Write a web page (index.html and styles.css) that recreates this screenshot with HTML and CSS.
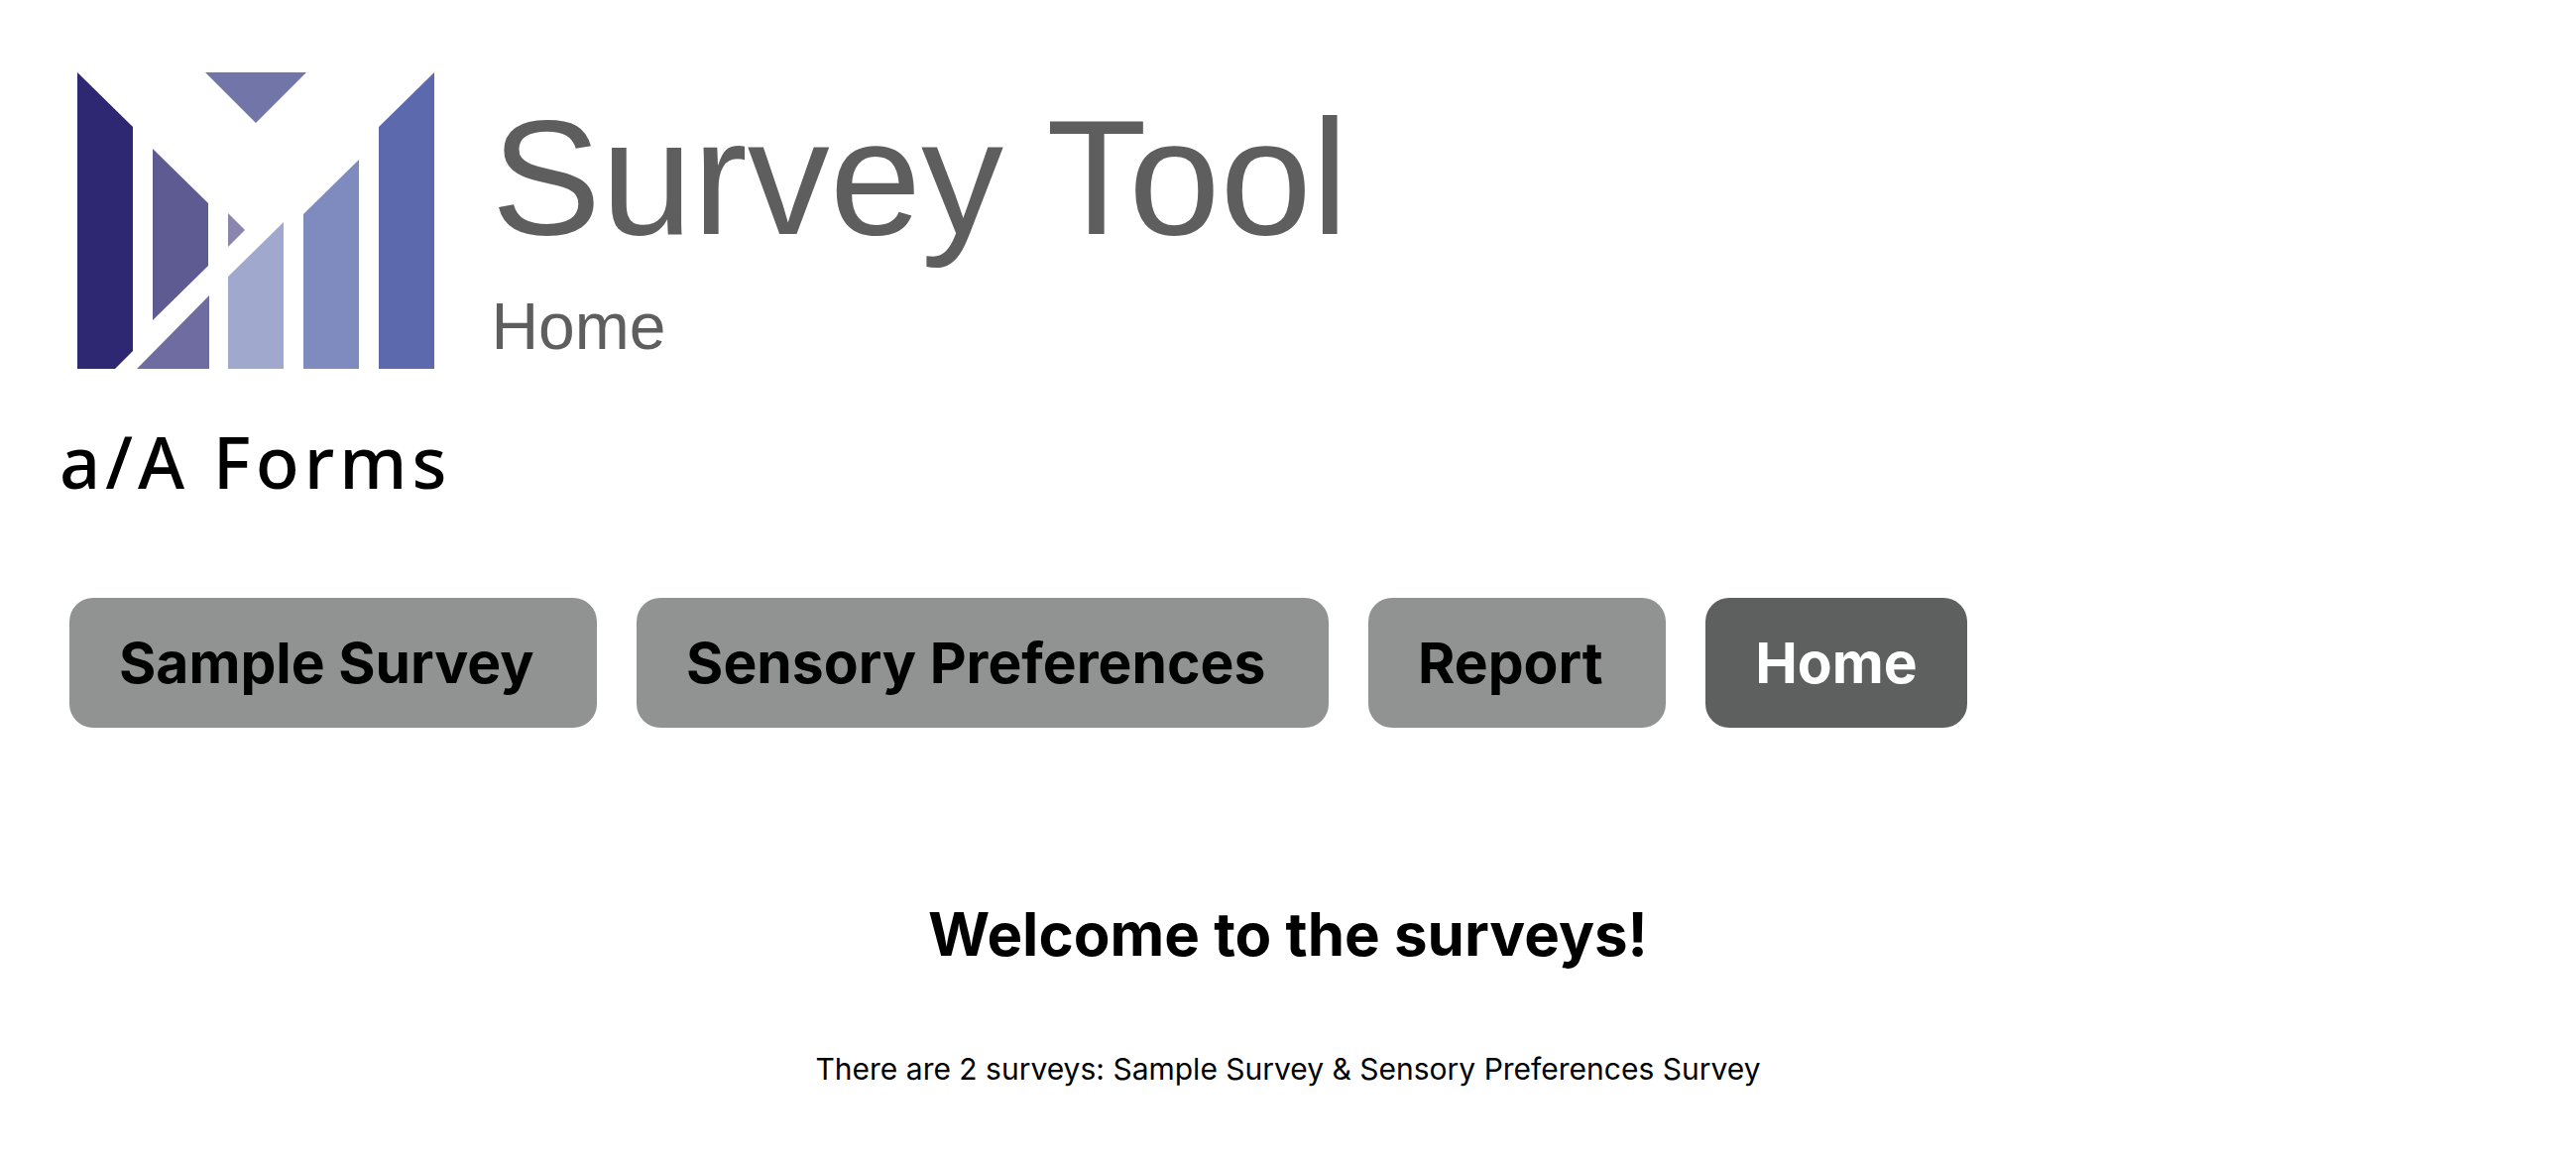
FILE: index.html
```html
<!DOCTYPE html>
<html lang="en">
<head>
<meta charset="utf-8">
<title>Survey Tool</title>
<link rel="stylesheet" href="styles.css">
</head>
<body>
<header class="masthead">
  <div class="brand">
    <svg class="brand-mark" viewBox="0 0 360 300" aria-hidden="true">
      <path fill="#2e2873" d="M0 0L56 55V281L38 299H0Z"/>
      <path fill="#5e5b93" d="M76 77L132 132V195L76 250Z"/>
      <path fill="#6e6ca0" d="M133 225V299H60Z"/>
      <path fill="#8985ae" d="M152 142L169 159L152 176Z"/>
      <path fill="#7275a7" d="M129 0H231L180 51Z"/>
      <path fill="#a0a8ce" d="M152 206L208 151V299H152Z"/>
      <path fill="#7f8bbe" d="M228 143L284 88V299H228Z"/>
      <path fill="#5c69ac" d="M304 55L360 0V299H304Z"/>
    </svg>
    <span class="brand-name">a/A Forms</span>
  </div>
  <div class="titles">
    <h1 class="title">Survey Tool</h1>
    <p class="subtitle">Home</p>
  </div>
</header>
<nav class="tabs">
  <a class="tab" href="#sample">Sample Survey&nbsp;</a>
  <a class="tab" href="#sensory">Sensory Preferences&nbsp;</a>
  <a class="tab" href="#report">Report&nbsp;</a>
  <a class="tab tab-active" href="#home" aria-current="page">Home</a>
</nav>
<main class="welcome">
  <h2 class="welcome-title">Welcome to the surveys!</h2>
  <p class="welcome-text">There are 2 surveys: Sample Survey &amp; Sensory Preferences Survey</p>
</main>
</body>
</html>
```
FILE: styles.css
```css
* {
  box-sizing: border-box;
}

body {
  margin: 0;
  background: #fff;
  color: #000;
  font-family: Inter, "Liberation Sans", sans-serif;
}

h1,
h2,
p {
  margin: 0;
}

.masthead {
  display: flex;
  gap: 40px;
  padding: 73px 60px 0;
}

.brand {
  display: flex;
  flex-direction: column;
  align-items: center;
  gap: 44px;
}

.brand-mark {
  display: block;
  width: 360px;
  height: 300px;
}

.brand-name {
  font-family: "Noto Sans", sans-serif;
  font-size: 72px;
  font-weight: 500;
  line-height: 96px;
  letter-spacing: 5px;
  white-space: nowrap;
}

.titles {
  padding-top: 10px;
  font-family: "Liberation Sans", Arial, sans-serif;
  color: #5e5e5e;
}

.title {
  font-size: 166px;
  font-weight: 400;
  line-height: 192px;
}

.subtitle {
  padding-top: 6px;
  font-size: 66px;
  line-height: 96px;
}

.tabs {
  display: flex;
  flex-wrap: wrap;
  gap: 40px;
  padding: 90px 70px 0;
}

.tab {
  padding: 30px 50px;
  border-radius: 24px;
  background: #919392;
  color: #000;
  font-size: 57px;
  font-weight: 700;
  line-height: 71px;
  text-decoration: none;
}

.tab-active {
  background: #5e605f;
  color: #fff;
}

.welcome {
  padding: 168px 60px 60px;
  text-align: center;
}

.welcome-title {
  font-size: 60px;
  font-weight: 700;
  line-height: 80px;
}

.welcome-text {
  padding-top: 72px;
  font-size: 30px;
  line-height: 48px;
}
```
